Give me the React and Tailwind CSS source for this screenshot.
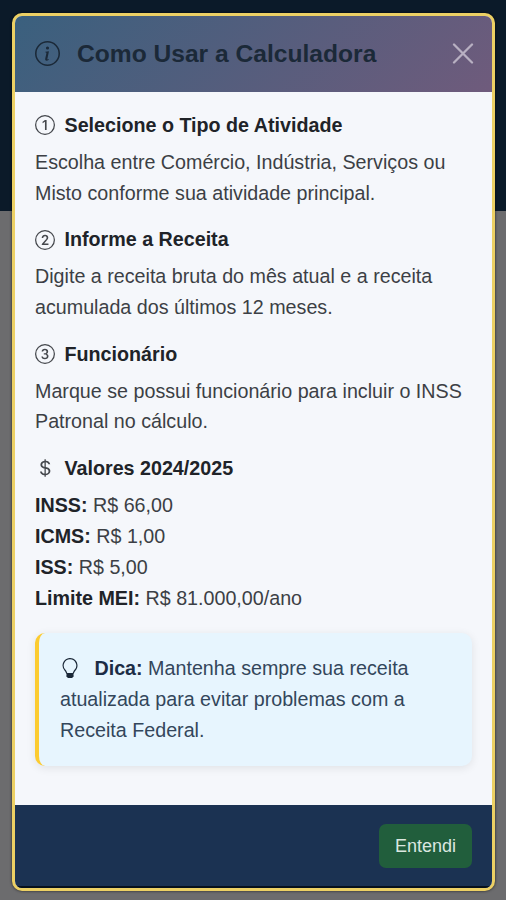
import React from "react";
import {
  Bs1Circle,
  Bs2Circle,
  Bs3Circle,
  BsCurrencyDollar,
  BsInfoCircle,
  BsLightbulb,
} from "react-icons/bs";

const steps = [
  {
    icon: Bs1Circle,
    title: "Selecione o Tipo de Atividade",
    text: "Escolha entre Comércio, Indústria, Serviços ou Misto conforme sua atividade principal.",
  },
  {
    icon: Bs2Circle,
    title: "Informe a Receita",
    text: "Digite a receita bruta do mês atual e a receita acumulada dos últimos 12 meses.",
  },
  {
    icon: Bs3Circle,
    title: "Funcionário",
    text: "Marque se possui funcionário para incluir o INSS Patronal no cálculo.",
  },
];

const values = [
  { label: "INSS:", value: "R$ 66,00" },
  { label: "ICMS:", value: "R$ 1,00" },
  { label: "ISS:", value: "R$ 5,00" },
  { label: "Limite MEI:", value: "R$ 81.000,00/ano" },
];

function SectionTitle({ icon: Icon, children }) {
  return (
    <h6 className="flex items-center h-6 mb-[9.5px] font-bold text-[19.7px] text-[#202328]">
      <Icon className="w-5 h-5 mr-[9.5px] shrink-0 text-[#44474c]" />
      {children}
    </h6>
  );
}

function Header() {
  return (
    <div className="flex items-center justify-between h-[76px] shrink-0 pl-5 pr-[18px] bg-linear-[135deg,#3a607e,#6f5b7c]">
      <h5 className="flex items-center font-bold text-[24.6px] text-[#1b2938]">
        <BsInfoCircle className="w-[25px] h-[25px] mr-[17px]" />
        Como Usar a Calculadora
      </h5>
      <button className="text-[#b8b0c2]" aria-label="Fechar">
        <svg width="22" height="22" viewBox="0 0 22 22" fill="none">
          <path
            d="M2 1.5L20 19.5M20 1.5L2 19.5"
            stroke="currentColor"
            strokeWidth="2.3"
            strokeLinecap="round"
          />
        </svg>
      </button>
    </div>
  );
}

function Tip() {
  return (
    <div className="mt-[19px] h-[133px] pl-[21px] pr-6 pt-[20.5px] rounded-[10px] border-l-4 border-[#fccb2f] bg-[#e7f5fe] text-[#33465b] shadow-[0_2px_10px_rgba(0,0,0,0.09)]">
      <BsLightbulb className="inline w-[20px] h-[20px] mr-[9px] align-[-3px] text-[#1b2838]" />{" "}
      <strong className="text-[#1c2c45]">Dica:</strong> Mantenha sempre sua
      receita atualizada para evitar problemas com a Receita Federal.
    </div>
  );
}

const App = () => {
  return (
    <div className="h-[900px] px-3 pt-[13px] bg-linear-[180deg,#0b1a29_211px,#6c6c6e_211px] font-['Liberation_Sans',Arial,sans-serif]">
      <div className="flex flex-col w-[482.5px] h-[877.5px] overflow-hidden rounded-[10px] border-3 border-[#ecd064] bg-[#f5f7fb] shadow-[0_0_3px_rgba(0,0,0,0.7)]">
        <Header />

        <div className="grow px-5 pt-[21.2px] text-[19.7px] leading-[30.9px] text-[#3c3f45]">
          {steps.map((step) => (
            <div key={step.title} className="mb-[19.1px]">
              <SectionTitle icon={step.icon}>{step.title}</SectionTitle>
              <p>{step.text}</p>
            </div>
          ))}

          <SectionTitle icon={BsCurrencyDollar}>Valores 2024/2025</SectionTitle>
          <ul>
            {values.map((item) => (
              <li key={item.label}>
                <strong className="text-[#202328]">{item.label}</strong>{" "}
                {item.value}
              </li>
            ))}
          </ul>

          <Tip />
        </div>

        <div className="flex items-center justify-end h-[82.5px] shrink-0 pt-0.5 pr-[19.5px] border-b-2 border-[#06101c] bg-[#1b3252]">
          <button className="w-[93px] h-[44px] rounded-[7px] bg-[#215e3c] text-[18px] text-[#dbe7e0]">
            Entendi
          </button>
        </div>
      </div>
    </div>
  );
};

export default App;
